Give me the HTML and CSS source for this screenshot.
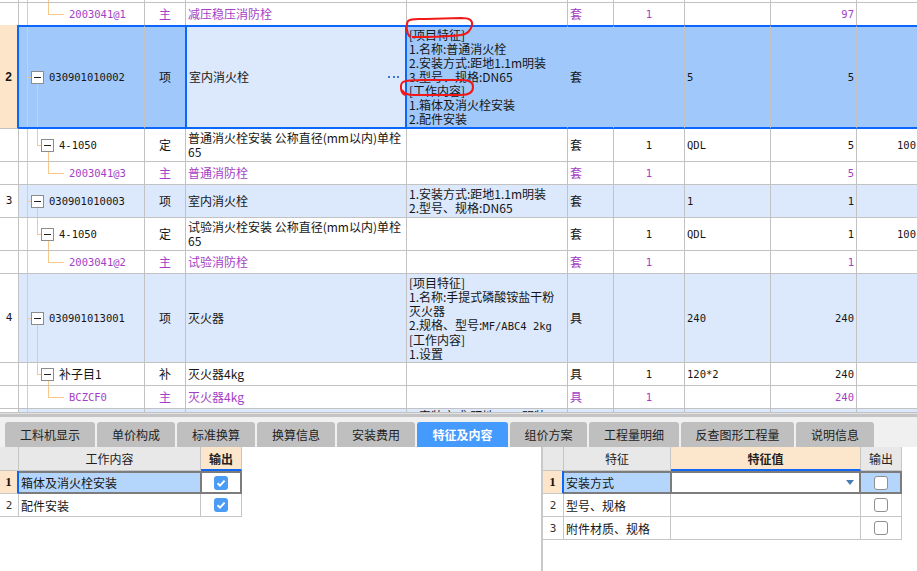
FILE: index.html
```html
<!DOCTYPE html>
<html lang="zh-CN">
<head>
<meta charset="utf-8">
<title>特征及内容</title>
<link rel="stylesheet" href="styles.css">
</head>
<body>
<div class="grid">
  <div class="row h3">
    <div class="rn"></div><div class="cd t-top"></div><div class="ty"></div><div class="nm"></div><div class="ft"></div><div class="un"></div><div class="qt"></div><div class="ex"></div><div class="va"></div><div class="la"></div>
  </div>
  <div class="row h23 zc">
    <div class="rn"></div><div class="cd t-leaf"><span class="m">2003041@1</span></div><div class="ty">主</div><div class="nm">减压稳压消防栓</div><div class="ft"></div><div class="un">套</div><div class="qt">1</div><div class="ex"></div><div class="va">97</div><div class="la"></div>
  </div>
  <div class="row sel">
    <div class="rn">2</div><div class="cd t-item"><span class="bx"></span><span class="m">030901010002</span></div><div class="ty">项</div><div class="nm"><span>室内消火栓</span><span class="dots"></span></div><div class="ft"><div>[项目特征]<br>1.名称:普通消火栓<br>2.安装方式:距地1.1m明装<br>3.型号、规格:DN65<br>[工作内容]<br>1.箱体及消火栓安装<br>2.配件安装</div></div><div class="un">套</div><div class="qt"></div><div class="ex">5</div><div class="va">5</div><div class="la"></div>
  </div>
  <div class="row h33">
    <div class="rn"></div><div class="cd t-sub"><span class="bx"></span><span class="m">4-1050</span></div><div class="ty">定</div><div class="nm"><div>普通消火栓安装 公称直径(mm以内)单栓<br>65</div></div><div class="ft"></div><div class="un">套</div><div class="qt">1</div><div class="ex">QDL</div><div class="va">5</div><div class="la">100</div>
  </div>
  <div class="row h23 zc">
    <div class="rn"></div><div class="cd t-leaf"><span class="m">2003041@3</span></div><div class="ty">主</div><div class="nm">普通消防栓</div><div class="ft"></div><div class="un">套</div><div class="qt">1</div><div class="ex"></div><div class="va">5</div><div class="la"></div>
  </div>
  <div class="row h33 it">
    <div class="rn">3</div><div class="cd t-item"><span class="bx"></span><span class="m">030901010003</span></div><div class="ty">项</div><div class="nm">室内消火栓</div><div class="ft"><div>1.安装方式:距地1.1m明装<br>2.型号、规格:DN65</div></div><div class="un">套</div><div class="qt"></div><div class="ex">1</div><div class="va">1</div><div class="la"></div>
  </div>
  <div class="row h33">
    <div class="rn"></div><div class="cd t-sub"><span class="bx"></span><span class="m">4-1050</span></div><div class="ty">定</div><div class="nm"><div>试验消火栓安装 公称直径(mm以内)单栓<br>65</div></div><div class="ft"></div><div class="un">套</div><div class="qt">1</div><div class="ex">QDL</div><div class="va">1</div><div class="la">100</div>
  </div>
  <div class="row h23 zc">
    <div class="rn"></div><div class="cd t-leaf"><span class="m">2003041@2</span></div><div class="ty">主</div><div class="nm">试验消防栓</div><div class="ft"></div><div class="un">套</div><div class="qt">1</div><div class="ex"></div><div class="va">1</div><div class="la"></div>
  </div>
  <div class="row h89 it">
    <div class="rn">4</div><div class="cd t-item"><span class="bx"></span><span class="m">030901013001</span></div><div class="ty">项</div><div class="nm">灭火器</div><div class="ft"><div>[项目特征]<br>1.名称:手提式磷酸铵盐干粉<br>灭火器<br>2.规格、型号:<span class="m">MF/ABC4 2kg</span><br>[工作内容]<br>1.设置</div></div><div class="un">具</div><div class="qt"></div><div class="ex">240</div><div class="va">240</div><div class="la"></div>
  </div>
  <div class="row h23">
    <div class="rn"></div><div class="cd t-sub"><span class="bx"></span><span>补子目1</span></div><div class="ty">补</div><div class="nm">灭火器4kg</div><div class="ft"></div><div class="un">具</div><div class="qt">1</div><div class="ex">120*2</div><div class="va">240</div><div class="la"></div>
  </div>
  <div class="row h23 zc">
    <div class="rn"></div><div class="cd t-leaf"><span class="m">BCZCF0</span></div><div class="ty">主</div><div class="nm">灭火器4kg</div><div class="ft"></div><div class="un">具</div><div class="qt">1</div><div class="ex"></div><div class="va">240</div><div class="la"></div>
  </div>
  <div class="row h4 it cut">
    <div class="rn"></div><div class="cd t-none"></div><div class="ty"></div><div class="nm"></div><div class="ft"><div>1.安装方式:距地1.1m明装</div></div><div class="un"></div><div class="qt"></div><div class="ex"></div><div class="va"></div><div class="la"></div>
  </div>
</div>
<div class="split"></div>
<div class="tabs">
  <div class="tab w90">工料机显示</div>
  <div class="tab w78">单价构成</div>
  <div class="tab w78">标准换算</div>
  <div class="tab w78">换算信息</div>
  <div class="tab w78">安装费用</div>
  <div class="tab w91 on">特征及内容</div>
  <div class="tab w77">组价方案</div>
  <div class="tab w90">工程量明细</div>
  <div class="tab w113">反查图形工程量</div>
  <div class="tab w78">说明信息</div>
</div>
<div class="panes">
  <div class="lp">
    <div class="bt bl">
      <div class="hd"></div><div class="hd">工作内容</div><div class="hd pk">输出</div>
      <div class="rn1">1</div><div class="c nm1">箱体及消火栓安装</div><div class="c ck1"><span class="cb on"><svg width="14" height="14" viewBox="0 0 14 14"><path d="M3.6 7.2 L6 9.6 L10.6 4.6" fill="none" stroke="#fff" stroke-width="2"/></svg></span></div>
      <div class="rnb">2</div><div class="c txt">配件安装</div><div class="c ckc"><span class="cb on"><svg width="14" height="14" viewBox="0 0 14 14"><path d="M3.6 7.2 L6 9.6 L10.6 4.6" fill="none" stroke="#fff" stroke-width="2"/></svg></span></div>
    </div>
  </div>
  <div class="rp">
    <div class="bt br">
      <div class="hd"></div><div class="hd">特征</div><div class="hd pk">特征值</div><div class="hd">输出</div>
      <div class="rn1">1</div><div class="c nm1">安装方式</div><div class="c val1"><span class="dd"></span></div><div class="c out1"><span class="cb"></span></div>
      <div class="rnb">2</div><div class="c txt">型号、规格</div><div class="c"></div><div class="c ckc"><span class="cb"></span></div>
      <div class="rnb">3</div><div class="c txt">附件材质、规格</div><div class="c"></div><div class="c ckc"><span class="cb"></span></div>
    </div>
  </div>
</div>
<svg class="annot" width="917" height="571" viewBox="0 0 917 571">
  <path d="M410 37 C406 33 406 24 408 21 C411 18 418 19 426 19 L461 18 C469 18 473 20 472 25 C471 30 468 34 461 35 C446 37 425 37 412 37" fill="none" stroke="#f21818" stroke-width="2"/>
  <path d="M405 95 C400 93 400 84 403 82 C406 80 414 80 424 80 L463 80 C470 80 473 83 473 87 C473 92 469 95 461 95 L414 95 C409 95 404 94 402 90" fill="none" stroke="#f21818" stroke-width="2"/>
</svg>
</body>
</html>
```
FILE: styles.css
```css
* { box-sizing: border-box; margin: 0; padding: 0; }
html, body { width: 917px; height: 571px; overflow: hidden; background: #fff; }
body {
  position: relative;
  font-family: "Noto Sans CJK SC", "Noto Sans", sans-serif;
  font-size: 12px;
  color: #161616;
}

/* ---------- top grid ---------- */
.grid { height: 413px; overflow: hidden; }
.row {
  --g: linear-gradient(#f6c88b, #f6c88b);
  display: grid;
  grid-template-columns: 19px 126px 41px 221px 161px 46px 71px 86px 86px 64px;
  width: 921px;
}
.row > div {
  display: flex;
  align-items: center;
  border-right: 1px solid #c2c2c2;
  border-bottom: 1px solid #c2c2c2;
  line-height: 14px;
  white-space: nowrap;
  overflow: hidden;
}
.h3 { height: 3px; }
.h4 { height: 4px; }
.h23 { height: 23px; }
.h33 { height: 33px; }
.h89 { height: 89px; }
.sel { height: 104px; margin-top: -1px; }

.m { font-family: "DejaVu Sans Mono", monospace; font-size: 10.5px; }
.rn { justify-content: center; font-family: "DejaVu Sans Mono", monospace; font-size: 11px; }
.ty { justify-content: center; }
.nm { padding-left: 2px; }
.ft { padding-left: 2px; }
.un { padding-left: 2px; }
.qt { justify-content: center; font-family: "DejaVu Sans Mono", monospace; font-size: 10.5px; }
.ex { padding-left: 2px; font-family: "DejaVu Sans Mono", monospace; font-size: 10.5px; }
.va { justify-content: flex-end; padding-right: 2px; font-family: "DejaVu Sans Mono", monospace; font-size: 10.5px; }
.la { justify-content: flex-end; padding-right: 4px; font-family: "DejaVu Sans Mono", monospace; font-size: 10.5px; }

/* tree lines */
.t-top, .t-leaf, .t-item, .t-sub, .t-none { background-repeat: no-repeat; }
.t-none { background-image: var(--g); background-position: 8px 0; background-size: 1px 100%; }
.t-top {
  background-image: var(--g), var(--g);
  background-position: 8px 0, 29px 0;
  background-size: 1px 100%, 1px 100%;
}
.t-leaf {
  padding-left: 50px;
  background-image: var(--g), var(--g), var(--g);
  background-position: 8px 0, 29px 0, 29px 50%;
  background-size: 1px 100%, 1px 50%, 16px 1px;
}
.t-item {
  padding-left: 12px;
  background-image: var(--g), var(--g), var(--g);
  background-position: 8px 0, 8px 50%, 18px 100%;
  background-size: 1px 100%, 4px 1px, 1px 50%;
}
.t-sub {
  padding-left: 22px;
  background-image: var(--g), var(--g), var(--g), var(--g);
  background-position: 8px 0, 18px 0, 18px 50%, 29px 100%;
  background-size: 1px 100%, 1px 50%, 4px 1px, 1px 50%;
}
.bx {
  flex: none;
  width: 13px;
  height: 13px;
  margin-right: 5px;
  border: 1px solid #8c8c8c;
  background: #fff linear-gradient(#222, #222) center / 7px 1px no-repeat;
}

/* row states */
.zc > div { color: #a43ec6; }
.it > div:not(.rn) { background-color: #dce8fc; }
.sel > div {
  background-color: #a0c8fa;
  border-top: 2px solid #0b66fb;
  border-bottom: 2px solid #0b66fb;
}
.sel > .rn {
  background-color: #fde5c9;
  border-top: 0;
  border-bottom: 1px solid #c2c2c2;
  border-right: 2px solid #0b66fb;
  font-family: "Liberation Sans", sans-serif;
  font-size: 12px;
  font-weight: bold;
}
.sel > .ty { border-right-color: #0b66fb; }
.sel > .nm {
  background-color: #dce8fc;
  border-left: 1px solid #0b66fb;
  border-right: 2px solid #0b66fb;
}
.dots {
  flex: none;
  margin-left: auto;
  margin-right: 6px;
  width: 11px;
  height: 2px;
  background: repeating-linear-gradient(90deg, #3a78d2 0 2px, transparent 2px 4.5px);
}
.cut > div { align-items: flex-start; }

/* ---------- splitter & tabs ---------- */
.split { height: 4px; border-top: 1px solid #e2e2e2; background: #c4c4c4; }
.tabs {
  height: 30px;
  background: #f0f0f0;
  display: flex;
  align-items: flex-end;
  gap: 2px;
  padding-left: 5px;
}
.tab {
  height: 25px;
  border-radius: 3px 3px 0 0;
  background: #bfbfbf;
  color: #222;
  display: flex;
  align-items: center;
  justify-content: center;
  font-size: 12px;
}
.tab.on { background: #459afd; color: #fff; font-weight: bold; }
.w77 { width: 77px; } .w78 { width: 78px; } .w90 { width: 90px; } .w91 { width: 91px; } .w113 { width: 113px; }

/* ---------- bottom panes ---------- */
.panes { display: flex; height: 124px; }
.lp { width: 541px; }
.rp { flex: 1; border-left: 2px solid #c9c9c9; }
.bt { display: grid; }
.bl { grid-template-columns: 19px 182px 41px; width: 242px; }
.br { grid-template-columns: 21px 107px 190px 41px; width: 359px; }
.bt > div {
  display: flex;
  align-items: center;
  height: 23px;
  border-right: 1px solid #c6c6c6;
  border-bottom: 1px solid #c6c6c6;
  white-space: nowrap;
  overflow: hidden;
}
.bt > .hd { height: 24px; background: #e8e8e8; justify-content: center; color: #222; }
.bt > .hd.pk { background: #fde7cc; font-weight: bold; border-bottom: 2px solid #1168f5; }
.rn1, .rnb { justify-content: center; }
.bt > .rn1 {
  background: #fde5c9;
  border-right: 2px solid #0b66fb;
  font-family: "Liberation Serif", serif;
  font-weight: bold;
  font-size: 13px;
}
.rnb { font-family: "DejaVu Sans Mono", monospace; font-size: 11px; color: #333; }
.c { padding-left: 2px; }
.bt > .nm1 {
  background: #b5d6fc;
  border-top: 2px solid #7c7c7c;
  border-bottom: 2px solid #7c7c7c;
  border-right-color: #7c7c7c;
}
.bt > .ck1 {
  justify-content: center;
  padding-left: 0;
  border-top: 2px solid #7c7c7c;
  border-bottom: 2px solid #7c7c7c;
  border-left: 1px solid #7c7c7c;
  border-right: 2px solid #7c7c7c;
}
.bt > .val1 {
  border-top: 2px solid #7c7c7c;
  border-bottom: 2px solid #7c7c7c;
  border-left: 1px solid #7c7c7c;
  border-right: 2px solid #7c7c7c;
}
.bt > .out1 {
  justify-content: center;
  padding-left: 0;
  background: #b5d6fc;
  border-top: 2px solid #7c7c7c;
  border-bottom: 2px solid #7c7c7c;
  border-right: 2px solid #7c7c7c;
}
.ckc { justify-content: center; padding-left: 0; }
.cb {
  display: flex;
  width: 14px;
  height: 14px;
  border: 1px solid #8f8f8f;
  border-radius: 3px;
  background: #fff;
}
.cb.on { border: 0; background: #4b9cf5; }
.dd {
  margin-left: auto;
  margin-right: 5px;
  width: 0;
  height: 0;
  border-left: 4px solid transparent;
  border-right: 4px solid transparent;
  border-top: 5px solid #4a7db0;
}

/* annotation overlay */
.annot { position: absolute; left: 0; top: 0; pointer-events: none; }
```
